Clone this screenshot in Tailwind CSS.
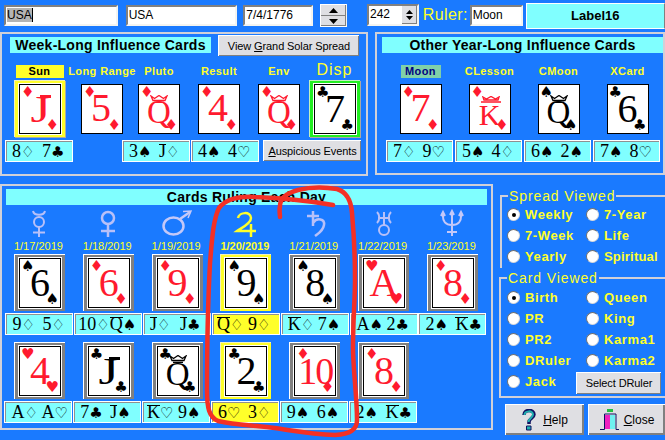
<!doctype html>
<html>
<head>
<meta charset="utf-8">
<script src="https://cdn.jsdelivr.net/npm/@tailwindcss/browser@4"></script>
</head>
<body>
<div class="relative w-[665px] h-[440px] overflow-hidden bg-[#1a7aff] font-['Liberation_Sans',sans-serif] text-black">

<!-- top controls -->
<div class="flex items-start h-[32px]">
  <div class="ml-[4px] mt-[5px] w-[114px] h-[21px] bg-white border-2 border-t-[#808080] border-l-[#808080] border-r-[#f4f4f0] border-b-[#f4f4f0] px-[1px] text-[12px] leading-[17px]"><span class="bg-[#b4b4b4] border-r border-black">USA</span></div>
  <div class="ml-[8px] mt-[5px] w-[112px] h-[21px] bg-white border-2 border-t-[#808080] border-l-[#808080] border-r-[#f4f4f0] border-b-[#f4f4f0] px-[1px] text-[12px] leading-[17px]">USA</div>
  <div class="ml-[6px] mt-[5px] w-[70px] h-[21px] bg-white border-2 border-t-[#808080] border-l-[#808080] border-r-[#f4f4f0] border-b-[#f4f4f0] px-[1px] text-[12px] leading-[17px]">7/4/1776</div>
  <div class="ml-[7px] mt-[4px] w-[27px] h-[23px] bg-[#dfdfe3] border border-t-white border-l-white border-r-[#f4f4f0] border-b-white flex flex-col items-center shadow-[inset_-1px_-1px_0_#808080]">
    <svg class="mt-[3px]" width="9" height="5" viewBox="0 0 9 5"><path d="M0 5L4.500 0L9 5Z" fill="#000"/></svg>
    <div class="mt-[2px] w-full h-px bg-[#808080]"></div>
    <svg class="mt-[3px]" width="9" height="5" viewBox="0 0 9 5"><path d="M0 0L9 0L4.500 5Z" fill="#000"/></svg>
  </div>
  <div class="ml-[20px] mt-[4px] w-[52px] h-[22px] bg-white border-2 border-t-[#808080] border-l-[#808080] border-r-[#f4f4f0] border-b-[#f4f4f0] pl-[1px] pr-0 text-[12px] leading-[17px] flex justify-between">242
    <div class="w-[15px] h-full bg-[#dfdfe3] flex flex-col items-center justify-center gap-[2px] shadow-[inset_-1px_-1px_0_#808080]">
      <svg width="7" height="4" viewBox="0 0 7 4"><path d="M0 4L3.500 0L7 4Z" fill="#000"/></svg>
      <svg width="7" height="4" viewBox="0 0 7 4"><path d="M0 0L7 0L3.500 4Z" fill="#000"/></svg>
    </div>
  </div>
  <div class="ml-[4px] mt-[6px] w-[47px] text-[#ffff2a] text-[16px] leading-[18px] tracking-[0.4px]">Ruler:</div>
  <div class="mt-[5px] w-[53px] h-[21px] bg-white border-2 border-t-[#808080] border-l-[#808080] border-r-[#f4f4f0] border-b-[#f4f4f0] px-[1px] text-[12px] leading-[17px]">Moon</div>
  <div class="ml-[3px] mt-[3px] w-[140px] h-[26px] bg-[#80ffff] border border-t-white border-l-white border-r-[#808080] border-b-white flex items-center justify-center text-[13px] font-bold">Label16</div>
</div>

<!-- influence panels -->
<div class="flex items-start">
  <div class="w-[368px] h-[144px] border-2 border-[#d0d0d8]">
    <div class="flex items-start h-[28px]">
      <div class="ml-[8px] mt-[3px] w-[201px] h-[16px] bg-[#80ffff] flex items-center justify-center text-[14px] leading-[16px] font-bold tracking-[0.25px] whitespace-nowrap">Week-Long Influence Cards</div>
      <div class="ml-[7px] mt-[1px] w-[141px] h-[21px] bg-[#dfdfe3] border-t border-l border-white shadow-[inset_-1px_-1px_0_#808080] flex items-center justify-center text-[11px] tracking-[-0.1px] whitespace-nowrap">View&nbsp;<u>G</u>rand Solar Spread</div>
    </div>
    <div class="grid grid-cols-[69px_56px_58px_62px_58px_53px] pl-[3px] text-[#ffff2a] text-[11px]">
      <div class="flex justify-center items-end h-[18px] pb-[2px] font-bold tracking-[0.4px]"><span class="w-[48px] h-[13px] leading-[13px] text-center bg-[#ffff2a] text-black">Sun</span></div>
      <div class="flex justify-center items-end h-[18px] pb-[2px] whitespace-nowrap leading-[13px] font-bold tracking-[0.4px]">Long Range</div>
      <div class="flex justify-center items-end h-[18px] pb-[2px] leading-[13px] font-bold tracking-[0.4px]">Pluto</div>
      <div class="flex justify-center items-end h-[18px] pb-[2px] leading-[13px] font-bold tracking-[0.4px]">Result</div>
      <div class="flex justify-center items-end h-[18px] pb-[2px] leading-[13px] font-bold tracking-[0.4px]">Env</div>
      <div class="flex justify-center items-end h-[18px] pb-[1px] text-[16px] leading-[18px] tracking-[1px]">Disp</div>
      <!-- cards -->
      <div class="flex justify-center h-[57px] items-center"><div class="flex w-[51px] h-[57px] items-center justify-center bg-[#ffff2a] border-t border-l border-[#f0f0c0] shadow-[1px_1px_0_#a8a8a8]"><div class="p-px bg-white"><div class="relative w-[42px] h-[50px] bg-white border border-black text-[#ff1a2e]"><span class="absolute left-[1px] top-0 font-['DejaVu_Sans'] text-[15px] leading-[15px]">♦</span><span class="absolute right-[1px] bottom-0 font-['DejaVu_Sans'] text-[15px] leading-[15px]">♦</span><span class="flex h-full items-center justify-center font-['Liberation_Serif'] text-[38px] leading-none"><span class="inline-block scale-x-[1.35]">J</span></span><span class="absolute left-[20px] top-[10px] w-[11px] h-[3px] bg-current"></span></div></div></div></div>
      <div class="flex justify-center h-[57px] items-center"><div class="relative w-[42px] h-[50px] bg-white border border-black text-[#ff1a2e]"><span class="absolute left-[1px] top-0 font-['DejaVu_Sans'] text-[15px] leading-[15px]">♦</span><span class="absolute right-[1px] bottom-0 font-['DejaVu_Sans'] text-[15px] leading-[15px]">♦</span><span class="flex h-full items-center justify-center font-['Liberation_Serif'] text-[40px] leading-none pb-[2px] pr-[2px]">5</span></div></div>
      <div class="flex justify-center h-[57px] items-center"><div class="relative w-[42px] h-[50px] bg-white border border-black text-[#ff1a2e]"><span class="absolute left-[1px] top-0 font-['DejaVu_Sans'] text-[15px] leading-[15px]">♦</span><span class="absolute right-[1px] bottom-0 font-['DejaVu_Sans'] text-[15px] leading-[15px]">♦</span><svg class="absolute left-[11px] top-[10px]" width="18" height="8" viewBox="0 0 18 8"><path d="M1 1L4.500 3.500L9 0.500L13.500 3.500L17 1L15 5.500H3ZM4 7.500H14" fill="none" stroke="currentColor" stroke-width="1.300"/></svg><span class="flex h-full items-center justify-center font-['Liberation_Serif'] text-[33px] leading-none pt-[8px]">Q</span></div></div>
      <div class="flex justify-center h-[57px] items-center"><div class="relative w-[42px] h-[50px] bg-white border border-black text-[#ff1a2e]"><span class="absolute left-[1px] top-0 font-['DejaVu_Sans'] text-[15px] leading-[15px]">♦</span><span class="absolute right-[1px] bottom-0 font-['DejaVu_Sans'] text-[15px] leading-[15px]">♦</span><span class="flex h-full items-center justify-center font-['Liberation_Serif'] text-[40px] leading-none pb-[2px] pr-[2px]">4</span></div></div>
      <div class="flex justify-center h-[57px] items-center"><div class="relative w-[42px] h-[50px] bg-white border border-black text-[#ff1a2e]"><span class="absolute left-[1px] top-0 font-['DejaVu_Sans'] text-[15px] leading-[15px]">♦</span><span class="absolute right-[1px] bottom-0 font-['DejaVu_Sans'] text-[15px] leading-[15px]">♦</span><svg class="absolute left-[11px] top-[10px]" width="18" height="8" viewBox="0 0 18 8"><path d="M1 1L4.500 3.500L9 0.500L13.500 3.500L17 1L15 5.500H3ZM4 7.500H14" fill="none" stroke="currentColor" stroke-width="1.300"/></svg><span class="flex h-full items-center justify-center font-['Liberation_Serif'] text-[33px] leading-none pt-[8px]">Q</span></div></div>
      <div class="flex justify-center h-[57px] items-center"><div class="flex w-[51px] h-[57px] items-center justify-center bg-[#22ee22] border-t border-l border-[#c0f0c0] shadow-[1px_1px_0_#a8a8a8]"><div class="p-px bg-white"><div class="relative w-[42px] h-[50px] bg-white border border-black text-black"><span class="absolute left-[1px] top-0 font-['DejaVu_Sans'] text-[15px] leading-[15px]">♣</span><span class="absolute right-[1px] bottom-0 font-['DejaVu_Sans'] text-[15px] leading-[15px]">♣</span><span class="flex h-full items-center justify-center font-['Liberation_Serif'] text-[40px] leading-none">7</span></div></div></div></div>
    </div>
    <div class="flex items-start mt-[3px] font-['Liberation_Serif'] text-[18px] leading-[18px]">
      <div class="ml-[3px] w-[68px] h-[22px] grid grid-cols-2 pl-[6px] pt-[1px] bg-[#80ffff] border border-white shadow-[inset_1px_1px_0_#909090]"><span>8<span class="font-['DejaVu_Sans'] text-[15px]">♢</span></span><span>7<span class="font-['DejaVu_Sans'] text-[15px]">♣</span></span></div>
      <div class="ml-[49px] w-[68px] h-[22px] grid grid-cols-2 pl-[6px] pt-[1px] bg-[#80ffff] border border-white shadow-[inset_1px_1px_0_#909090]"><span>3<span class="font-['DejaVu_Sans'] text-[15px]">♠</span></span><span><span class="inline-block border-t border-black leading-[12px]">J</span><span class="font-['DejaVu_Sans'] text-[15px]">♢</span></span></div>
      <div class="ml-[1px] w-[68px] h-[22px] grid grid-cols-2 pl-[6px] pt-[1px] bg-[#80ffff] border border-white shadow-[inset_1px_1px_0_#909090]"><span>4<span class="font-['DejaVu_Sans'] text-[15px]">♠</span></span><span>4<span class="font-['DejaVu_Sans'] text-[15px]">♡</span></span></div>
      <div class="ml-[4px] w-[98px] h-[21px] bg-[#dfdfe3] border-t border-l border-white shadow-[inset_-1px_-1px_0_#808080] flex items-center justify-center font-['Liberation_Sans'] text-[11px] tracking-[-0.1px] whitespace-nowrap"><span><u>A</u>uspicious Events</span></div>
    </div>
  </div>

  <div class="ml-[7px] w-[290px] h-[143px] border-2 border-[#d0d0d8]">
    <div class="h-[28px] pt-[3px]">
      <div class="ml-[5px] w-[281px] h-[16px] bg-[#80ffff] flex items-center justify-center text-[14px] leading-[16px] font-bold tracking-[0.25px]">Other Year-Long Influence Cards</div>
    </div>
    <div class="grid grid-cols-[repeat(4,69px)] pl-[9px] text-[#ffff2a] text-[11px]">
      <div class="flex justify-center items-end h-[18px] pb-[2px] font-bold tracking-[0.4px]"><span class="w-[40px] h-[13px] leading-[13px] text-center bg-[#80d0a8] text-[#000080]">Moon</span></div>
      <div class="flex justify-center items-end h-[18px] pb-[2px] leading-[13px] font-bold tracking-[0.4px]">CLesson</div>
      <div class="flex justify-center items-end h-[18px] pb-[2px] leading-[13px] font-bold tracking-[0.4px]">CMoon</div>
      <div class="flex justify-center items-end h-[18px] pb-[2px] leading-[13px] font-bold tracking-[0.4px]">XCard</div>
      <div class="flex justify-center h-[57px] items-center"><div class="relative w-[42px] h-[50px] bg-white border border-black text-[#ff1a2e]"><span class="absolute left-[1px] top-0 font-['DejaVu_Sans'] text-[15px] leading-[15px]">♦</span><span class="absolute right-[1px] bottom-0 font-['DejaVu_Sans'] text-[15px] leading-[15px]">♦</span><span class="flex h-full items-center justify-center font-['Liberation_Serif'] text-[40px] leading-none pb-[2px]">7</span></div></div>
      <div class="flex justify-center h-[57px] items-center"><div class="relative w-[42px] h-[50px] bg-white border border-black text-[#ff1a2e]"><span class="absolute left-[1px] top-0 font-['DejaVu_Sans'] text-[15px] leading-[15px]">♦</span><span class="absolute right-[1px] bottom-0 font-['DejaVu_Sans'] text-[15px] leading-[15px]">♦</span><svg class="absolute left-[10px] top-[11px]" width="22" height="7" viewBox="0 0 22 7"><path d="M3 1L6.500 3L11 0.500L15.500 3L19 1L18 4H4ZM1 6H21" fill="none" stroke="currentColor" stroke-width="1.400"/></svg><span class="flex h-full items-center justify-center font-['Liberation_Serif'] text-[30px] leading-none pt-[12px]">K</span></div></div>
      <div class="flex justify-center h-[57px] items-center"><div class="relative w-[42px] h-[50px] bg-white border border-black text-black"><span class="absolute left-[1px] top-0 font-['DejaVu_Sans'] text-[15px] leading-[15px]">♠</span><span class="absolute right-[1px] bottom-0 font-['DejaVu_Sans'] text-[15px] leading-[15px]">♠</span><svg class="absolute left-[11px] top-[10px]" width="18" height="8" viewBox="0 0 18 8"><path d="M1 1L4.500 3.500L9 0.500L13.500 3.500L17 1L15 5.500H3ZM4 7.500H14" fill="none" stroke="currentColor" stroke-width="1.300"/></svg><span class="flex h-full items-center justify-center font-['Liberation_Serif'] text-[33px] leading-none pt-[8px]">Q</span></div></div>
      <div class="flex justify-center h-[57px] items-center"><div class="relative w-[42px] h-[50px] bg-white border border-black text-black"><span class="absolute left-[1px] top-0 font-['DejaVu_Sans'] text-[15px] leading-[15px]">♣</span><span class="absolute right-[1px] bottom-0 font-['DejaVu_Sans'] text-[15px] leading-[15px]">♣</span><span class="flex h-full items-center justify-center font-['Liberation_Serif'] text-[40px] leading-none">6</span></div></div>
    </div>
    <div class="grid grid-cols-[repeat(4,69px)] pl-[9px] mt-[3px] font-['Liberation_Serif'] text-[18px] leading-[18px]">
      <div class="w-[67px] h-[22px] grid grid-cols-2 pl-[6px] pt-[1px] bg-[#80ffff] border border-white shadow-[inset_1px_1px_0_#909090]"><span>7<span class="font-['DejaVu_Sans'] text-[15px]">♢</span></span><span>9<span class="font-['DejaVu_Sans'] text-[15px]">♡</span></span></div>
      <div class="w-[67px] h-[22px] grid grid-cols-2 pl-[6px] pt-[1px] bg-[#80ffff] border border-white shadow-[inset_1px_1px_0_#909090]"><span>5<span class="font-['DejaVu_Sans'] text-[15px]">♠</span></span><span>4<span class="font-['DejaVu_Sans'] text-[15px]">♢</span></span></div>
      <div class="w-[67px] h-[22px] grid grid-cols-2 pl-[6px] pt-[1px] bg-[#80ffff] border border-white shadow-[inset_1px_1px_0_#909090]"><span>6<span class="font-['DejaVu_Sans'] text-[15px]">♠</span></span><span>2<span class="font-['DejaVu_Sans'] text-[15px]">♠</span></span></div>
      <div class="w-[67px] h-[22px] grid grid-cols-2 pl-[6px] pt-[1px] bg-[#80ffff] border border-white shadow-[inset_1px_1px_0_#909090]"><span>7<span class="font-['DejaVu_Sans'] text-[15px]">♠</span></span><span>8<span class="font-['DejaVu_Sans'] text-[15px]">♡</span></span></div>
    </div>
  </div>
</div>

<!-- lower section -->
<div class="flex items-start mt-[8px]">
  <div class="w-[493px] h-[246px] border-2 border-[#d0d0d8]">
    <div class="ml-[4px] mt-[3px] w-[481px] h-[16px] bg-[#80ffff] flex items-center justify-center text-[14px] leading-[16px] font-bold tracking-[0.25px]">Cards Ruling Each Day</div>
    <div class="grid grid-cols-[repeat(7,68.83px)] pl-[3px] mt-[4px] justify-items-center">
      <!-- planets -->
      <svg width="40" height="28" viewBox="0 0 40 28" fill="none" stroke="#b8c0f8" stroke-width="2"><path d="M14 2C15 7 25 7 26 2M20 18V28M14 23.500H26"/><circle cx="20" cy="13" r="5"/></svg>
      <svg width="40" height="28" viewBox="0 0 40 28" fill="none" stroke="#b8c0f8" stroke-width="2.500"><circle cx="20" cy="9" r="6"/><path d="M20 15V28M13 22H27"/></svg>
      <svg width="40" height="28" viewBox="0 0 40 28" fill="none" stroke="#c4c8f8" stroke-width="2.500"><ellipse cx="16.500" cy="17" rx="10" ry="8.500"/><path d="M23 10L33 3"/><path d="M26 2.500L34 2L31 9" stroke-width="1.500"/></svg>
      <svg width="40" height="28" viewBox="0 0 40 28" fill="none" stroke="#ffff2a" stroke-width="2.500"><path d="M12 9C13 3 25 2 25 9C25 15 15 19 11 22H30M25 15V28"/></svg>
      <svg width="40" height="28" viewBox="0 0 40 28" fill="none" stroke="#b8c0f8" stroke-width="2.500"><path d="M18 2V17M12 7H24M18 14C22 8 30 10 29 16C28 22 24 24 20 27"/></svg>
      <svg width="40" height="28" viewBox="0 0 40 28" fill="none" stroke="#b8c0f8" stroke-width="2"><path d="M13 3C16 6 16 11 13 14M27 3C24 6 24 11 27 14M14 9H26M20 3V17"/><circle cx="20" cy="21" r="5"/></svg>
      <svg width="40" height="28" viewBox="0 0 40 28" fill="none" stroke="#c4c8f8" stroke-width="2"><path d="M20 3V27M15 23H25M11 4C10 13 14 16 20 16C26 16 30 13 29 4M9 7L11 3L13 7M18 6L20 2L22 6M27 7L29 3L31 7"/></svg>
      <!-- dates -->
      <div class="mt-[2px] h-[15px] -translate-x-px text-[#ffff2a] text-[11px] leading-[14px]">1/17/2019</div>
      <div class="mt-[2px] h-[15px] -translate-x-px text-[#ffff2a] text-[11px] leading-[14px]">1/18/2019</div>
      <div class="mt-[2px] h-[15px] -translate-x-px text-[#ffff2a] text-[11px] leading-[14px]">1/19/2019</div>
      <div class="mt-[2px] h-[15px] -translate-x-px text-[#ffff2a] text-[11px] leading-[14px] font-bold">1/20/2019</div>
      <div class="mt-[2px] h-[15px] -translate-x-px text-[#ffff2a] text-[11px] leading-[14px]">1/21/2019</div>
      <div class="mt-[2px] h-[15px] -translate-x-px text-[#ffff2a] text-[11px] leading-[14px]">1/22/2019</div>
      <div class="mt-[2px] h-[15px] -translate-x-px text-[#ffff2a] text-[11px] leading-[14px]">1/23/2019</div>
      <!-- row 1 cards -->
      <div class="flex w-[51px] h-[57px] items-center justify-center bg-[#808080] border-t border-l border-white"><div class="p-px bg-white"><div class="relative w-[42px] h-[50px] bg-white border border-black text-black"><span class="absolute left-[1px] top-0 font-['DejaVu_Sans'] text-[15px] leading-[15px]">♠</span><span class="absolute right-[1px] bottom-0 font-['DejaVu_Sans'] text-[15px] leading-[15px]">♠</span><span class="flex h-full items-center justify-center font-['Liberation_Serif'] text-[40px] leading-none">6</span></div></div></div>
      <div class="flex w-[51px] h-[57px] items-center justify-center bg-[#808080] border-t border-l border-white"><div class="p-px bg-white"><div class="relative w-[42px] h-[50px] bg-white border border-black text-[#ff1a2e]"><span class="absolute left-[1px] top-0 font-['DejaVu_Sans'] text-[15px] leading-[15px]">♦</span><span class="absolute right-[1px] bottom-0 font-['DejaVu_Sans'] text-[15px] leading-[15px]">♦</span><span class="flex h-full items-center justify-center font-['Liberation_Serif'] text-[40px] leading-none">6</span></div></div></div>
      <div class="flex w-[51px] h-[57px] items-center justify-center bg-[#808080] border-t border-l border-white"><div class="p-px bg-white"><div class="relative w-[42px] h-[50px] bg-white border border-black text-[#ff1a2e]"><span class="absolute left-[1px] top-0 font-['DejaVu_Sans'] text-[15px] leading-[15px]">♦</span><span class="absolute right-[1px] bottom-0 font-['DejaVu_Sans'] text-[15px] leading-[15px]">♦</span><span class="flex h-full items-center justify-center font-['Liberation_Serif'] text-[40px] leading-none">9</span></div></div></div>
      <div class="flex w-[51px] h-[57px] items-center justify-center bg-[#ffff2a] border-t border-l border-[#f0f0c0]"><div class="p-px bg-white"><div class="relative w-[42px] h-[50px] bg-white border border-black text-black"><span class="absolute left-[1px] top-0 font-['DejaVu_Sans'] text-[15px] leading-[15px]">♠</span><span class="absolute right-[1px] bottom-0 font-['DejaVu_Sans'] text-[15px] leading-[15px]">♠</span><span class="flex h-full items-center justify-center font-['Liberation_Serif'] text-[40px] leading-none">9</span></div></div></div>
      <div class="flex w-[51px] h-[57px] items-center justify-center bg-[#808080] border-t border-l border-white"><div class="p-px bg-white"><div class="relative w-[42px] h-[50px] bg-white border border-black text-black"><span class="absolute left-[1px] top-0 font-['DejaVu_Sans'] text-[15px] leading-[15px]">♠</span><span class="absolute right-[1px] bottom-0 font-['DejaVu_Sans'] text-[15px] leading-[15px]">♠</span><span class="flex h-full items-center justify-center font-['Liberation_Serif'] text-[40px] leading-none">8</span></div></div></div>
      <div class="flex w-[51px] h-[57px] items-center justify-center bg-[#808080] border-t border-l border-white"><div class="p-px bg-white"><div class="relative w-[42px] h-[50px] bg-white border border-black text-[#ff1a2e]"><span class="absolute left-[1px] top-0 font-['DejaVu_Sans'] text-[15px] leading-[15px]">♥</span><span class="absolute right-[1px] bottom-0 font-['DejaVu_Sans'] text-[15px] leading-[15px]">♥</span><span class="flex h-full items-center justify-center font-['Liberation_Serif'] text-[40px] leading-none">A</span></div></div></div>
      <div class="flex w-[51px] h-[57px] items-center justify-center bg-[#808080] border-t border-l border-white"><div class="p-px bg-white"><div class="relative w-[42px] h-[50px] bg-white border border-black text-[#ff1a2e]"><span class="absolute left-[1px] top-0 font-['DejaVu_Sans'] text-[15px] leading-[15px]">♦</span><span class="absolute right-[1px] bottom-0 font-['DejaVu_Sans'] text-[15px] leading-[15px]">♦</span><span class="flex h-full items-center justify-center font-['Liberation_Serif'] text-[40px] leading-none">8</span></div></div></div>
      <!-- row 1 strips -->
      <div class="mt-[2px] w-[68px] h-[22px] grid grid-cols-2 pl-[6px] pt-[1px] bg-[#80ffff] border border-white shadow-[inset_1px_1px_0_#909090] font-['Liberation_Serif'] text-[18px] leading-[18px]"><span>9<span class="font-['DejaVu_Sans'] text-[15px]">♢</span></span><span>5<span class="font-['DejaVu_Sans'] text-[15px]">♢</span></span></div>
      <div class="mt-[2px] w-[68px] h-[22px] grid grid-cols-2 pl-[3px] pt-[1px] bg-[#80ffff] border border-white shadow-[inset_1px_1px_0_#909090] font-['Liberation_Serif'] text-[18px] leading-[18px]"><span class="whitespace-nowrap">10<span class="font-['DejaVu_Sans'] text-[15px]">♢</span></span><span class="whitespace-nowrap"><span class="inline-block border-t border-black leading-[12px]">Q</span><span class="font-['DejaVu_Sans'] text-[15px]">♠</span></span></div>
      <div class="mt-[2px] w-[68px] h-[22px] grid grid-cols-2 pl-[6px] pt-[1px] bg-[#80ffff] border border-white shadow-[inset_1px_1px_0_#909090] font-['Liberation_Serif'] text-[18px] leading-[18px]"><span><span class="inline-block border-t border-black leading-[12px]">J</span><span class="font-['DejaVu_Sans'] text-[15px]">♢</span></span><span><span class="inline-block border-t border-black leading-[12px]">J</span><span class="font-['DejaVu_Sans'] text-[15px]">♣</span></span></div>
      <div class="mt-[2px] w-[68px] h-[22px] grid grid-cols-2 pl-[4px] pt-[1px] bg-[#ffff2a] border border-white shadow-[inset_1px_1px_0_#909090] font-['Liberation_Serif'] text-[18px] leading-[18px]"><span><span class="inline-block border-t border-black leading-[12px]">Q</span><span class="font-['DejaVu_Sans'] text-[15px]">♢</span></span><span>9<span class="font-['DejaVu_Sans'] text-[15px]">♢</span></span></div>
      <div class="mt-[2px] w-[68px] h-[22px] grid grid-cols-2 pl-[6px] pt-[1px] bg-[#80ffff] border border-white shadow-[inset_1px_1px_0_#909090] font-['Liberation_Serif'] text-[18px] leading-[18px]"><span><span class="inline-block border-t border-black leading-[12px]">K</span><span class="font-['DejaVu_Sans'] text-[15px]">♢</span></span><span>7<span class="font-['DejaVu_Sans'] text-[15px]">♠</span></span></div>
      <div class="mt-[2px] w-[68px] h-[22px] grid grid-cols-2 pl-[6px] pt-[1px] bg-[#80ffff] border border-white shadow-[inset_1px_1px_0_#909090] font-['Liberation_Serif'] text-[18px] leading-[18px]"><span>A<span class="font-['DejaVu_Sans'] text-[15px]">♠</span></span><span>2<span class="font-['DejaVu_Sans'] text-[15px]">♣</span></span></div>
      <div class="mt-[2px] w-[68px] h-[22px] grid grid-cols-2 pl-[6px] pt-[1px] bg-[#80ffff] border border-white shadow-[inset_1px_1px_0_#909090] font-['Liberation_Serif'] text-[18px] leading-[18px]"><span>2<span class="font-['DejaVu_Sans'] text-[15px]">♠</span></span><span><span class="inline-block border-t border-black leading-[12px]">K</span><span class="font-['DejaVu_Sans'] text-[15px]">♣</span></span></div>
      <!-- row 2 cards -->
      <div class="mt-[7px] flex w-[51px] h-[57px] items-center justify-center bg-[#808080] border-t border-l border-white"><div class="p-px bg-white"><div class="relative w-[42px] h-[50px] bg-white border border-black text-[#ff1a2e]"><span class="absolute left-[1px] top-0 font-['DejaVu_Sans'] text-[15px] leading-[15px]">♥</span><span class="absolute right-[1px] bottom-0 font-['DejaVu_Sans'] text-[15px] leading-[15px]">♥</span><span class="flex h-full items-center justify-center font-['Liberation_Serif'] text-[40px] leading-none">4</span></div></div></div>
      <div class="mt-[7px] flex w-[51px] h-[57px] items-center justify-center bg-[#808080] border-t border-l border-white"><div class="p-px bg-white"><div class="relative w-[42px] h-[50px] bg-white border border-black text-black"><span class="absolute left-[1px] top-0 font-['DejaVu_Sans'] text-[15px] leading-[15px]">♣</span><span class="absolute right-[1px] bottom-0 font-['DejaVu_Sans'] text-[15px] leading-[15px]">♣</span><span class="flex h-full items-center justify-center font-['Liberation_Serif'] text-[38px] leading-none"><span class="inline-block scale-x-[1.35]">J</span></span><span class="absolute left-[20px] top-[10px] w-[11px] h-[3px] bg-current"></span></div></div></div>
      <div class="mt-[7px] flex w-[51px] h-[57px] items-center justify-center bg-[#808080] border-t border-l border-white"><div class="p-px bg-white"><div class="relative w-[42px] h-[50px] bg-white border border-black text-black"><span class="absolute left-[1px] top-0 font-['DejaVu_Sans'] text-[15px] leading-[15px]">♣</span><span class="absolute right-[1px] bottom-0 font-['DejaVu_Sans'] text-[15px] leading-[15px]">♣</span><svg class="absolute left-[11px] top-[8px]" width="18" height="8" viewBox="0 0 18 8"><path d="M1 1L4.500 3.500L9 0.500L13.500 3.500L17 1L15 5.500H3ZM4 7.500H14" fill="none" stroke="currentColor" stroke-width="1.300"/></svg><span class="flex h-full items-center justify-center font-['Liberation_Serif'] text-[33px] leading-none pt-[6px]">Q</span></div></div></div>
      <div class="mt-[7px] flex w-[51px] h-[57px] items-center justify-center bg-[#ffff2a] border-t border-l border-[#f0f0c0]"><div class="p-px bg-white"><div class="relative w-[42px] h-[50px] bg-white border border-black text-black"><span class="absolute left-[1px] top-0 font-['DejaVu_Sans'] text-[15px] leading-[15px]">♣</span><span class="absolute right-[1px] bottom-0 font-['DejaVu_Sans'] text-[15px] leading-[15px]">♣</span><span class="flex h-full items-center justify-center font-['Liberation_Serif'] text-[40px] leading-none">2</span></div></div></div>
      <div class="mt-[7px] flex w-[51px] h-[57px] items-center justify-center bg-[#808080] border-t border-l border-white"><div class="p-px bg-white"><div class="relative w-[42px] h-[50px] bg-white border border-black text-[#ff1a2e]"><span class="absolute left-[1px] top-0 font-['DejaVu_Sans'] text-[15px] leading-[15px]">♦</span><span class="absolute right-[1px] bottom-0 font-['DejaVu_Sans'] text-[15px] leading-[15px]">♦</span><span class="flex h-full items-center justify-center font-['Liberation_Serif'] text-[38px] tracking-[-2px] leading-none">10</span></div></div></div>
      <div class="mt-[7px] flex w-[51px] h-[57px] items-center justify-center bg-[#808080] border-t border-l border-white"><div class="p-px bg-white"><div class="relative w-[42px] h-[50px] bg-white border border-black text-[#ff1a2e]"><span class="absolute left-[1px] top-0 font-['DejaVu_Sans'] text-[15px] leading-[15px]">♦</span><span class="absolute right-[1px] bottom-0 font-['DejaVu_Sans'] text-[15px] leading-[15px]">♦</span><span class="flex h-full items-center justify-center font-['Liberation_Serif'] text-[40px] leading-none">8</span></div></div></div>
      <div></div>
      <!-- row 2 strips -->
      <div class="mt-[2px] -translate-x-px w-[68px] h-[22px] grid grid-cols-2 pl-[6px] pt-[1px] bg-[#80ffff] border border-white shadow-[inset_1px_1px_0_#909090] font-['Liberation_Serif'] text-[18px] leading-[18px]"><span>A<span class="font-['DejaVu_Sans'] text-[15px]">♢</span></span><span>A<span class="font-['DejaVu_Sans'] text-[15px]">♡</span></span></div>
      <div class="mt-[2px] -translate-x-px w-[68px] h-[22px] grid grid-cols-2 pl-[6px] pt-[1px] bg-[#80ffff] border border-white shadow-[inset_1px_1px_0_#909090] font-['Liberation_Serif'] text-[18px] leading-[18px]"><span>7<span class="font-['DejaVu_Sans'] text-[15px]">♣</span></span><span><span class="inline-block border-t border-black leading-[12px]">J</span><span class="font-['DejaVu_Sans'] text-[15px]">♠</span></span></div>
      <div class="mt-[2px] -translate-x-px w-[68px] h-[22px] grid grid-cols-2 pl-[4px] pt-[1px] bg-[#80ffff] border border-white shadow-[inset_1px_1px_0_#909090] font-['Liberation_Serif'] text-[18px] leading-[18px]"><span><span class="inline-block border-t border-black leading-[12px]">K</span><span class="font-['DejaVu_Sans'] text-[15px]">♡</span></span><span>9<span class="font-['DejaVu_Sans'] text-[15px]">♠</span></span></div>
      <div class="mt-[2px] -translate-x-px w-[68px] h-[22px] grid grid-cols-2 pl-[6px] pt-[1px] bg-[#ffff2a] border border-white shadow-[inset_1px_1px_0_#909090] font-['Liberation_Serif'] text-[18px] leading-[18px]"><span>6<span class="font-['DejaVu_Sans'] text-[15px]">♡</span></span><span>3<span class="font-['DejaVu_Sans'] text-[15px]">♢</span></span></div>
      <div class="mt-[2px] -translate-x-px w-[68px] h-[22px] grid grid-cols-2 pl-[6px] pt-[1px] bg-[#80ffff] border border-white shadow-[inset_1px_1px_0_#909090] font-['Liberation_Serif'] text-[18px] leading-[18px]"><span>9<span class="font-['DejaVu_Sans'] text-[15px]">♠</span></span><span>6<span class="font-['DejaVu_Sans'] text-[15px]">♠</span></span></div>
      <div class="mt-[2px] -translate-x-px w-[68px] h-[22px] grid grid-cols-2 pl-[6px] pt-[1px] bg-[#80ffff] border border-white shadow-[inset_1px_1px_0_#909090] font-['Liberation_Serif'] text-[18px] leading-[18px]"><span>2<span class="font-['DejaVu_Sans'] text-[15px]">♠</span></span><span><span class="inline-block border-t border-black leading-[12px]">K</span><span class="font-['DejaVu_Sans'] text-[15px]">♣</span></span></div>
    </div>
  </div>

  <!-- right column -->
  <div class="ml-[6px] w-[166px] pt-[11px] text-[#ffff2a] text-[13px] font-bold tracking-[0.6px]">
    <div class="ml-[1px] h-[73px] border-t-2 border-l-2 border-[#d0d0d8]">
      <div class="-mt-[9px] ml-[6px] w-fit bg-[#1a7aff] px-px text-[14px] leading-[16px] font-normal tracking-[0.9px]">Spread Viewed</div>
      <div class="grid grid-cols-[79px_80px] auto-rows-[21px] pl-[5px] items-center whitespace-nowrap">
        <div class="flex items-center gap-[5px]"><span class="flex items-center justify-center w-[13px] h-[13px] rounded-full bg-white border border-t-[#707070] border-l-[#707070] border-r-[#d8d8d8] border-b-[#d8d8d8]"><span class="w-[4px] h-[4px] rounded-full bg-black"></span></span>Weekly</div>
        <div class="flex items-center gap-[5px]"><span class="w-[13px] h-[13px] rounded-full bg-white border border-t-[#707070] border-l-[#707070] border-r-[#d8d8d8] border-b-[#d8d8d8]"></span>7-Year</div>
        <div class="flex items-center gap-[5px]"><span class="w-[13px] h-[13px] rounded-full bg-white border border-t-[#707070] border-l-[#707070] border-r-[#d8d8d8] border-b-[#d8d8d8]"></span>7-Week</div>
        <div class="flex items-center gap-[5px]"><span class="w-[13px] h-[13px] rounded-full bg-white border border-t-[#707070] border-l-[#707070] border-r-[#d8d8d8] border-b-[#d8d8d8]"></span>Life</div>
        <div class="flex items-center gap-[5px]"><span class="w-[13px] h-[13px] rounded-full bg-white border border-t-[#707070] border-l-[#707070] border-r-[#d8d8d8] border-b-[#d8d8d8]"></span>Yearly</div>
        <div class="flex items-center gap-[5px] tracking-[0.2px]"><span class="w-[13px] h-[13px] rounded-full bg-white border border-t-[#707070] border-l-[#707070] border-r-[#d8d8d8] border-b-[#d8d8d8]"></span>Spiritual</div>
      </div>
    </div>
    <div class="mt-[9px] h-[121px] border-2 border-r-0 border-[#d0d0d8]">
      <div class="-mt-[9px] ml-[6px] w-fit bg-[#1a7aff] px-px text-[14px] leading-[16px] font-normal tracking-[0.9px]">Card Viewed</div>
      <div class="grid grid-cols-[79px_80px] auto-rows-[21px] pl-[6px] pt-[1px] items-center whitespace-nowrap">
        <div class="flex items-center gap-[5px]"><span class="flex items-center justify-center w-[13px] h-[13px] rounded-full bg-white border border-t-[#707070] border-l-[#707070] border-r-[#d8d8d8] border-b-[#d8d8d8]"><span class="w-[4px] h-[4px] rounded-full bg-black"></span></span>Birth</div>
        <div class="flex items-center gap-[5px]"><span class="w-[13px] h-[13px] rounded-full bg-white border border-t-[#707070] border-l-[#707070] border-r-[#d8d8d8] border-b-[#d8d8d8]"></span>Queen</div>
        <div class="flex items-center gap-[5px]"><span class="w-[13px] h-[13px] rounded-full bg-white border border-t-[#707070] border-l-[#707070] border-r-[#d8d8d8] border-b-[#d8d8d8]"></span>PR</div>
        <div class="flex items-center gap-[5px]"><span class="w-[13px] h-[13px] rounded-full bg-white border border-t-[#707070] border-l-[#707070] border-r-[#d8d8d8] border-b-[#d8d8d8]"></span>King</div>
        <div class="flex items-center gap-[5px]"><span class="w-[13px] h-[13px] rounded-full bg-white border border-t-[#707070] border-l-[#707070] border-r-[#d8d8d8] border-b-[#d8d8d8]"></span>PR2</div>
        <div class="flex items-center gap-[5px]"><span class="w-[13px] h-[13px] rounded-full bg-white border border-t-[#707070] border-l-[#707070] border-r-[#d8d8d8] border-b-[#d8d8d8]"></span>Karma1</div>
        <div class="flex items-center gap-[5px]"><span class="w-[13px] h-[13px] rounded-full bg-white border border-t-[#707070] border-l-[#707070] border-r-[#d8d8d8] border-b-[#d8d8d8]"></span>DRuler</div>
        <div class="flex items-center gap-[5px]"><span class="w-[13px] h-[13px] rounded-full bg-white border border-t-[#707070] border-l-[#707070] border-r-[#d8d8d8] border-b-[#d8d8d8]"></span>Karma2</div>
        <div class="flex items-center gap-[5px]"><span class="w-[13px] h-[13px] rounded-full bg-white border border-t-[#707070] border-l-[#707070] border-r-[#d8d8d8] border-b-[#d8d8d8]"></span>Jack</div>
        <div class="w-[85px] -ml-[10px] h-[22px] mt-[3px] bg-[#dfdfe3] border-t border-l border-white shadow-[inset_-1px_-1px_0_#808080] flex items-center justify-center text-black text-[11px] font-normal tracking-[-0.1px]">Select DRuler</div>
      </div>
    </div>
    <div class="flex mt-[6px] ml-[6px] gap-[4px] text-black text-[12px] font-normal tracking-normal">
      <div class="w-[79px] h-[31px] bg-[#dfdfe3] border-t border-l border-white shadow-[inset_-2px_-2px_0_#808080] flex items-center justify-center gap-[7px]">
        <svg width="14" height="22" viewBox="0 0 14 22"><path d="M2 6C2 0 12 0 12 5.500C12 9 7 9.500 7 13V15" fill="none" stroke="#101060" stroke-width="3.500"/><path d="M2.500 6C2.500 1.500 11 1 11 5.500C11 8.500 6.500 9.500 6.500 13" fill="none" stroke="#20b0b0" stroke-width="2"/><path d="M4.500 17H9V21H4.500Z" fill="#20b0b0" stroke="#101060"/></svg>
        <span><u>H</u>elp</span>
      </div>
      <div class="w-[77px] h-[31px] bg-[#dfdfe3] border-t border-l border-white shadow-[inset_-2px_-2px_0_#808080] flex items-center justify-center gap-[4px]">
        <svg width="20" height="22" viewBox="0 0 20 22"><rect x="7" y="0" width="6" height="3" fill="#20c040"/><path d="M0 20.500H4.500V5H16V20.500H19" fill="none" stroke="#101060"/><rect x="5" y="6" width="5" height="14" fill="#f020c0"/><rect x="10" y="6" width="5" height="14" fill="#70f0f0"/></svg>
        <span><u>C</u>lose</span>
      </div>
    </div>
  </div>
</div>

<!-- hand-drawn annotation over the window -->
<svg class="absolute inset-0 pointer-events-none" width="665" height="440" viewBox="0 0 665 440" fill="none"><path d="M333 205C310 201 285 198 255 197C238 196 226 199 219 208C213 220 212 240 210 263C208 300 207 350 207 390C207 408 209 417 218 421C235 425 250 425 267 427C290 430 310 434 335 435C350 434 357 430 357 420C357 395 353 370 353 347C353 320 355 300 355 280C355 255 354 235 352 213C351 200 347 192 337 189C325 187 310 187 298 190C287 193 280 198 280 206C279 211 280 214 280 217" stroke="#f43025" stroke-width="4.500" stroke-linecap="round" stroke-linejoin="round"/></svg>
</div>
</body>
</html>
